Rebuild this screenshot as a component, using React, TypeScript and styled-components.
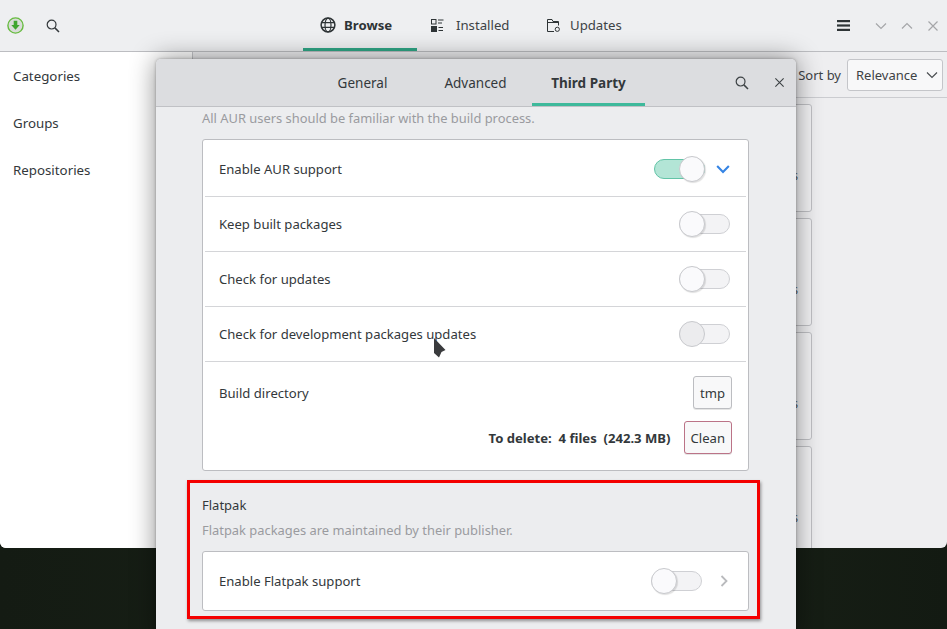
import React from "react";
import styled, { createGlobalStyle } from "styled-components";

const Global = createGlobalStyle`
  html, body { margin: 0; padding: 0; background: #141b13; }
  * { box-sizing: border-box; }
  body { font-family: "Noto Sans", "Open Sans", sans-serif; font-size: 13px; color: #2e3436; }
`;

const Desktop = styled.div`
  position: relative;
  width: 947px;
  height: 629px;
  overflow: hidden;
  background: linear-gradient(90deg, #141b13, #1a2318 60%, #131a12);
`;

const MainWindow = styled.div`
  position: absolute;
  left: 0;
  top: 0;
  width: 947px;
  height: 548px;
  display: flex;
  flex-direction: column;
  background: #eeeef0;
  border-radius: 0 0 6px 6px;
  overflow: hidden;
`;

const HeaderBar = styled.header`
  height: 52px;
  flex: none;
  display: grid;
  grid-template-columns: 303px auto 1fr;
  align-items: stretch;
  background: #eeeff1;
  border-bottom: 1px solid #bcbdc1;
`;

const HeaderLeft = styled.div`
  display: flex;
  align-items: center;
  gap: 22px;
  padding-left: 7px;
`;

const HeaderTabs = styled.nav`
  display: flex;
`;

const HeaderTab = styled.div<{ $active?: boolean; $w: number; $pad: number; $gap: number }>`
  width: ${(p) => p.$w}px;
  height: 51px;
  display: flex;
  align-items: center;
  gap: ${(p) => p.$gap}px;
  padding-left: ${(p) => p.$pad}px;
  padding-top: 2px;
  font-size: 13.2px;
  font-weight: ${(p) => (p.$active ? 700 : 400)};
  color: ${(p) => (p.$active ? "#2e3436" : "#3d4245")};
  border-bottom: 3px solid ${(p) => (p.$active ? "#2fa585" : "transparent")};
`;

const HeaderRight = styled.div`
  display: flex;
  align-items: center;
  justify-content: flex-end;
  padding-right: 8px;
  gap: 14px;
`;

const Menu = styled.div`
  margin-right: 11px;
  display: flex;
`;

const MainBody = styled.div`
  flex: 1;
  display: flex;
  min-height: 0;
`;

const Sidebar = styled.aside`
  width: 193px;
  flex: none;
  background: #fff;
  border-right: 1px solid #c5c6ca;
`;

const SideItem = styled.div`
  height: 47px;
  display: flex;
  align-items: center;
  padding-left: 13px;
  font-size: 13.3px;
  color: #33383b;
`;

const Content = styled.main`
  flex: 1;
  display: flex;
  flex-direction: column;
  min-width: 0;
`;

const SortBar = styled.div`
  height: 46px;
  flex: none;
  display: flex;
  align-items: center;
  justify-content: flex-end;
  gap: 6px;
  padding-right: 4px;
  border-bottom: 1px solid #cbccd0;
  font-size: 13px;
  color: #3d4245;
`;

const SortSelect = styled.div`
  width: 96px;
  height: 32px;
  display: flex;
  align-items: center;
  justify-content: space-between;
  padding: 0 4px 0 8px;
  background: #f8f8f9;
  border: 1px solid #c4c5c9;
  border-radius: 3px;
`;

const CardColumn = styled.div`
  display: flex;
  flex-direction: column;
  gap: 6px;
  padding-top: 6px;
`;

const PackageCard = styled.div`
  width: 619px;
  height: 108px;
  flex: none;
  display: flex;
  align-items: center;
  justify-content: flex-end;
  padding: 34px 13px 0 0;
  background: #f3f3f5;
  border: 1px solid #c0c1c5;
  border-radius: 3px;
  font-size: 12px;
  color: #55585b;
`;

const Dialog = styled.section`
  position: absolute;
  left: 156px;
  top: 59px;
  width: 640px;
  height: 580px;
  display: flex;
  flex-direction: column;
  background: #ecedef;
  border-radius: 5px 5px 0 0;
  box-shadow: 0 0 3px rgba(0, 0, 0, 0.3), 0 0 26px rgba(0, 0, 0, 0.45);
`;

const DialogHeader = styled.header`
  position: relative;
  height: 48px;
  flex: none;
  display: flex;
  justify-content: center;
  background: #dcdde0;
  border-bottom: 1px solid #c0c1c5;
  border-radius: 5px 5px 0 0;
  padding-right: 1px;
`;

const DialogTab = styled.div<{ $active?: boolean; $w: number }>`
  width: ${(p) => p.$w}px;
  height: 47px;
  display: flex;
  align-items: center;
  justify-content: center;
  padding-top: 3px;
  font-size: 13.5px;
  font-weight: ${(p) => (p.$active ? 700 : 400)};
  color: #33383b;
  border-bottom: 3px solid ${(p) => (p.$active ? "#3eb99b" : "transparent")};
`;

const DialogActions = styled.div`
  position: absolute;
  right: 11px;
  top: 0;
  height: 47px;
  display: flex;
  align-items: center;
  gap: 25px;
`;

const DialogBody = styled.div`
  flex: 1;
  padding: 1px 47px 0 46px;
`;

const Hint = styled.p`
  margin: 0;
  height: 20px;
  line-height: 20px;
  font-size: 12.9px;
  color: #9a9b9f;
`;

const ListCard = styled.div`
  margin-top: 11px;
  background: #fff;
  border: 1px solid #bcbdc1;
  border-radius: 3px;
`;

const Row = styled.div<{ $h: number; $last?: boolean; $top?: number }>`
  height: ${(p) => p.$h}px;
  display: flex;
  align-items: center;
  justify-content: space-between;
  margin: 0 2px;
  padding: ${(p) => p.$top ?? 0}px 16px 0 14px;
  border-bottom: ${(p) => (p.$last ? "none" : "1px solid #d4d5d8")};
  font-size: 13.1px;
  color: #33383b;
`;

const RowEnd = styled.div`
  display: flex;
  align-items: center;
  gap: 11px;
`;

const TrackBox = styled.div<{ $on?: boolean }>`
  position: relative;
  width: 51px;
  height: 20px;
  border-radius: 10px;
  background: ${(p) => (p.$on ? "#b3e5d6" : "#f3f3f5")};
  border: 1px solid ${(p) => (p.$on ? "#62c4a7" : "#cfd0d4")};
`;

const Knob = styled.div<{ $on?: boolean; $dim?: boolean }>`
  position: absolute;
  top: -4px;
  ${(p) => (p.$on ? "right: -1px;" : "left: -1px;")}
  width: 26px;
  height: 26px;
  border-radius: 50%;
  background: ${(p) => (p.$dim ? "#ececee" : "#fafafc")};
  border: 1px solid #c8c9cd;
  box-shadow: ${(p) => (p.$dim ? "none" : "1px 1px 1px rgba(0,0,0,0.12)")};
`;

const DirRow = styled.div`
  height: 108px;
  margin: 0 2px;
  padding: 14px 14px 0 14px;
  display: flex;
  flex-direction: column;
  gap: 12px;
  font-size: 13.1px;
  color: #33383b;
`;

const DirLine = styled.div`
  display: flex;
  align-items: center;
  justify-content: space-between;
  height: 33px;
`;

const CleanLine = styled.div`
  display: flex;
  align-items: center;
  justify-content: flex-end;
  gap: 13px;
  height: 33px;
  font-weight: 700;
`;

const SmallButton = styled.div<{ $danger?: boolean }>`
  height: 33px;
  padding: 0 6px;
  display: flex;
  align-items: center;
  font-weight: 400;
  background: #f8f8f9;
  color: #33383b;
  border: 1px solid ${(p) => (p.$danger ? "#bb7387" : "#bcbdc1")};
  border-radius: 3px;
  box-shadow: 0 1px 0 rgba(0, 0, 0, 0.1);
`;

const SectionTitle = styled.h3`
  margin: 24px 0 0;
  height: 20px;
  line-height: 20px;
  font-size: 13px;
  font-weight: 400;
  color: #33383b;
`;

const SectionHint = styled(Hint)`
  margin-top: 5px;
`;

const FlatpakEnd = styled(RowEnd)`
  gap: 16px;
`;

const Annotation = styled.div`
  position: absolute;
  left: 187px;
  top: 480px;
  width: 573px;
  height: 139px;
  border: 3px solid #f40000;
  box-shadow: 1px 2px 3px rgba(0, 0, 0, 0.4);
  pointer-events: none;
`;

const Pointer = styled.svg`
  position: absolute;
  left: 433px;
  top: 337px;
`;

const AppIcon = () => (
  <svg width="17" height="17" viewBox="0 0 17 17">
    <circle cx="8.5" cy="8.5" r="7.6" fill="#d9dcd8" stroke="#66bb3f" strokeWidth="1.4" />
    <path d="M6.7 3.8h3.6v4.3h2.4l-4.2 4.7-4.2-4.7h2.4z" fill="#3fa52e" />
  </svg>
);

const Search = ({ c = "#33383b" }: { c?: string }) => (
  <svg width="14" height="14" viewBox="0 0 14 14" fill="none" stroke={c} strokeWidth="1.2">
    <circle cx="5.6" cy="5.6" r="4.4" />
    <path d="M8.9 8.9 13 13" strokeWidth="1.5" />
  </svg>
);

const Globe = () => (
  <svg width="16" height="16" viewBox="0 0 16 16" fill="none" stroke="#2e3436" strokeWidth="1.5">
    <circle cx="8" cy="8" r="6.9" />
    <ellipse cx="8" cy="8" rx="3" ry="6.9" strokeWidth="1.2" />
    <path d="M1.5 5.7h13M1.5 10.3h13" strokeWidth="1.2" />
  </svg>
);

const InstalledIcon = () => (
  <svg width="13" height="13" viewBox="0 0 13 13" fill="none" stroke="#2e3436">
    <rect x="0.5" y="0.5" width="4.5" height="4.5" />
    <rect x="0.5" y="7.5" width="5" height="5" fill="#2e3436" />
    <path d="M7 1h5.5M7 4h4M7.5 8.5H12M7.5 11.5H12" />
  </svg>
);

const UpdatesIcon = () => (
  <svg width="13" height="13" viewBox="0 0 13 13" fill="none" stroke="#2e3436">
    <path d="M.5 12.5V.5h4.5l1 2h5.5v4" />
    <path d="M.5 12.5H7" />
    <path d="M.5 3.5h11" />
    <circle cx="10.3" cy="10.3" r="2.1" />
  </svg>
);

const Hamburger = () => (
  <svg width="13" height="11" viewBox="0 0 13 11" fill="#2e3436">
    <rect width="13" height="2.2" />
    <rect y="4.4" width="13" height="2.2" />
    <rect y="8.8" width="13" height="2.2" />
  </svg>
);

const Chev = ({ d, c, w = 1.2, s = 12 }: { d: string; c: string; w?: number; s?: number }) => (
  <svg width={s} height={s} viewBox="0 0 12 12" fill="none" stroke={c} strokeWidth={w}>
    <path d={d} />
  </svg>
);

const DOWN = "M1 3.5 6 8.5 11 3.5";
const UP = "M1 8.5 6 3.5 11 8.5";
const CROSS = "M1.5 1.5 10.5 10.5M10.5 1.5 1.5 10.5";
const RIGHT = "M3.5 1 8.5 6 3.5 11";

const Toggle = ({ on, dim }: { on?: boolean; dim?: boolean }) => (
  <TrackBox $on={on}>
    <Knob $on={on} $dim={dim} />
  </TrackBox>
);

export default function App() {
  return (
    <Desktop>
      <Global />
      <MainWindow>
        <HeaderBar>
          <HeaderLeft>
            <AppIcon />
            <Search />
          </HeaderLeft>
          <HeaderTabs>
            <HeaderTab $active $w={114} $pad={17} $gap={8}>
              <Globe />
              Browse
            </HeaderTab>
            <HeaderTab $w={116} $pad={14} $gap={12}>
              <InstalledIcon />
              Installed
            </HeaderTab>
            <HeaderTab $w={114} $pad={14} $gap={10}>
              <UpdatesIcon />
              Updates
            </HeaderTab>
          </HeaderTabs>
          <HeaderRight>
            <Menu>
              <Hamburger />
            </Menu>
            <Chev d={DOWN} c="#a5a6a9" />
            <Chev d={UP} c="#a5a6a9" />
            <Chev d={CROSS} c="#a5a6a9" />
          </HeaderRight>
        </HeaderBar>
        <MainBody>
          <Sidebar>
            <SideItem>Categories</SideItem>
            <SideItem>Groups</SideItem>
            <SideItem>Repositories</SideItem>
          </Sidebar>
          <Content>
            <SortBar>
              Sort by
              <SortSelect>
                Relevance
                <Chev d={DOWN} c="#4a4e51" />
              </SortSelect>
            </SortBar>
            <CardColumn>
              <PackageCard>s</PackageCard>
              <PackageCard>s</PackageCard>
              <PackageCard>s</PackageCard>
              <PackageCard>s</PackageCard>
            </CardColumn>
          </Content>
        </MainBody>
      </MainWindow>
      <Dialog>
        <DialogHeader>
          <DialogTab $w={113}>General</DialogTab>
          <DialogTab $w={113}>Advanced</DialogTab>
          <DialogTab $active $w={113}>Third Party</DialogTab>
          <DialogActions>
            <Search c="#3d4245" />
            <Chev d={CROSS} c="#3d4245" s={11} />
          </DialogActions>
        </DialogHeader>
        <DialogBody>
          <Hint>All AUR users should be familiar with the build process.</Hint>
          <ListCard>
            <Row $h={57} $top={2}>
              Enable AUR support
              <RowEnd>
                <Toggle on />
                <Chev d={DOWN} c="#3584e4" w={1.8} s={14} />
              </RowEnd>
            </Row>
            <Row $h={55}>
              Keep built packages
              <Toggle />
            </Row>
            <Row $h={55}>
              Check for updates
              <Toggle />
            </Row>
            <Row $h={55}>
              Check for development packages updates
              <Toggle dim />
            </Row>
            <DirRow>
              <DirLine>
                Build directory
                <SmallButton>tmp</SmallButton>
              </DirLine>
              <CleanLine>
                To delete: &nbsp;4 files &nbsp;(242.3 MB)
                <SmallButton $danger>Clean</SmallButton>
              </CleanLine>
            </DirRow>
          </ListCard>
          <SectionTitle>Flatpak</SectionTitle>
          <SectionHint>Flatpak packages are maintained by their publisher.</SectionHint>
          <ListCard>
            <Row $h={58} $last>
              Enable Flatpak support
              <FlatpakEnd>
                <Toggle />
                <Chev d={RIGHT} c="#b9babd" w={1.8} s={12} />
              </FlatpakEnd>
            </Row>
          </ListCard>
        </DialogBody>
      </Dialog>
      <Annotation />
      <Pointer width="14" height="22" viewBox="0 0 14 22">
        <path d="M1 1 12.5 13 8.5 15 6 20.5 1 16z" fill="#3a3b3d" />
      </Pointer>
    </Desktop>
  );
}
